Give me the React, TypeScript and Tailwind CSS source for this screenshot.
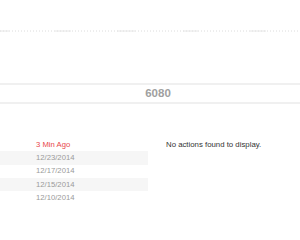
const activity = [
  { label: "3 Min Ago", recent: true },
  { label: "12/23/2014", recent: false },
  { label: "12/17/2014", recent: false },
  { label: "12/15/2014", recent: false },
  { label: "12/10/2014", recent: false },
];

// solid pieces of the chart gridline, rest is dotted
const solidSegments = [
  [0, 9],
  [55, 71],
  [117, 135],
  [183, 198],
  [250, 266],
];

const GridLine = () => (
  <svg width="300" height="2" viewBox="0 0 300 2" className="block w-full">
    <line x1="0" y1="1" x2="300" y2="1" stroke="#dcdcdc" strokeWidth="1" strokeDasharray="1 2" />
    {solidSegments.map(([a, b], i) => (
      <line key={i} x1={a} y1="1" x2={b} y2="1" stroke="#e6e6e6" strokeWidth="1" />
    ))}
  </svg>
);

export default function App() {
  return (
    <div className="w-[300px] h-[240px] bg-white overflow-hidden font-['Liberation_Sans',Arial,sans-serif]">
      <div className="pt-[30px]">
        <GridLine />
      </div>

      <div className="mt-[51px] border-y-2 border-[#f0f0f0] h-[21px] flex items-center justify-center pl-4">
        <span className="text-[11.5px] font-bold text-[#a0a0a0]">6080</span>
      </div>

      <div className="mt-[34px] flex">
        <div className="w-[148px]">
          {activity.map((row, i) => (
            <div
              key={row.label}
              className={`h-[13.3px] flex items-center pl-[36px] text-[7.7px] ${i % 2 === 1 ? "bg-[#f6f6f6]" : ""} ${row.recent ? "text-[#e8474a]" : "text-[#9a9a9a]"}`}
            >
              {row.label}
            </div>
          ))}
        </div>
        <div className="pl-[18px]">
          <div className="h-[13.3px] flex items-center text-[7.8px] text-[#333]">
            No actions found to display.
          </div>
        </div>
      </div>
    </div>
  );
}
